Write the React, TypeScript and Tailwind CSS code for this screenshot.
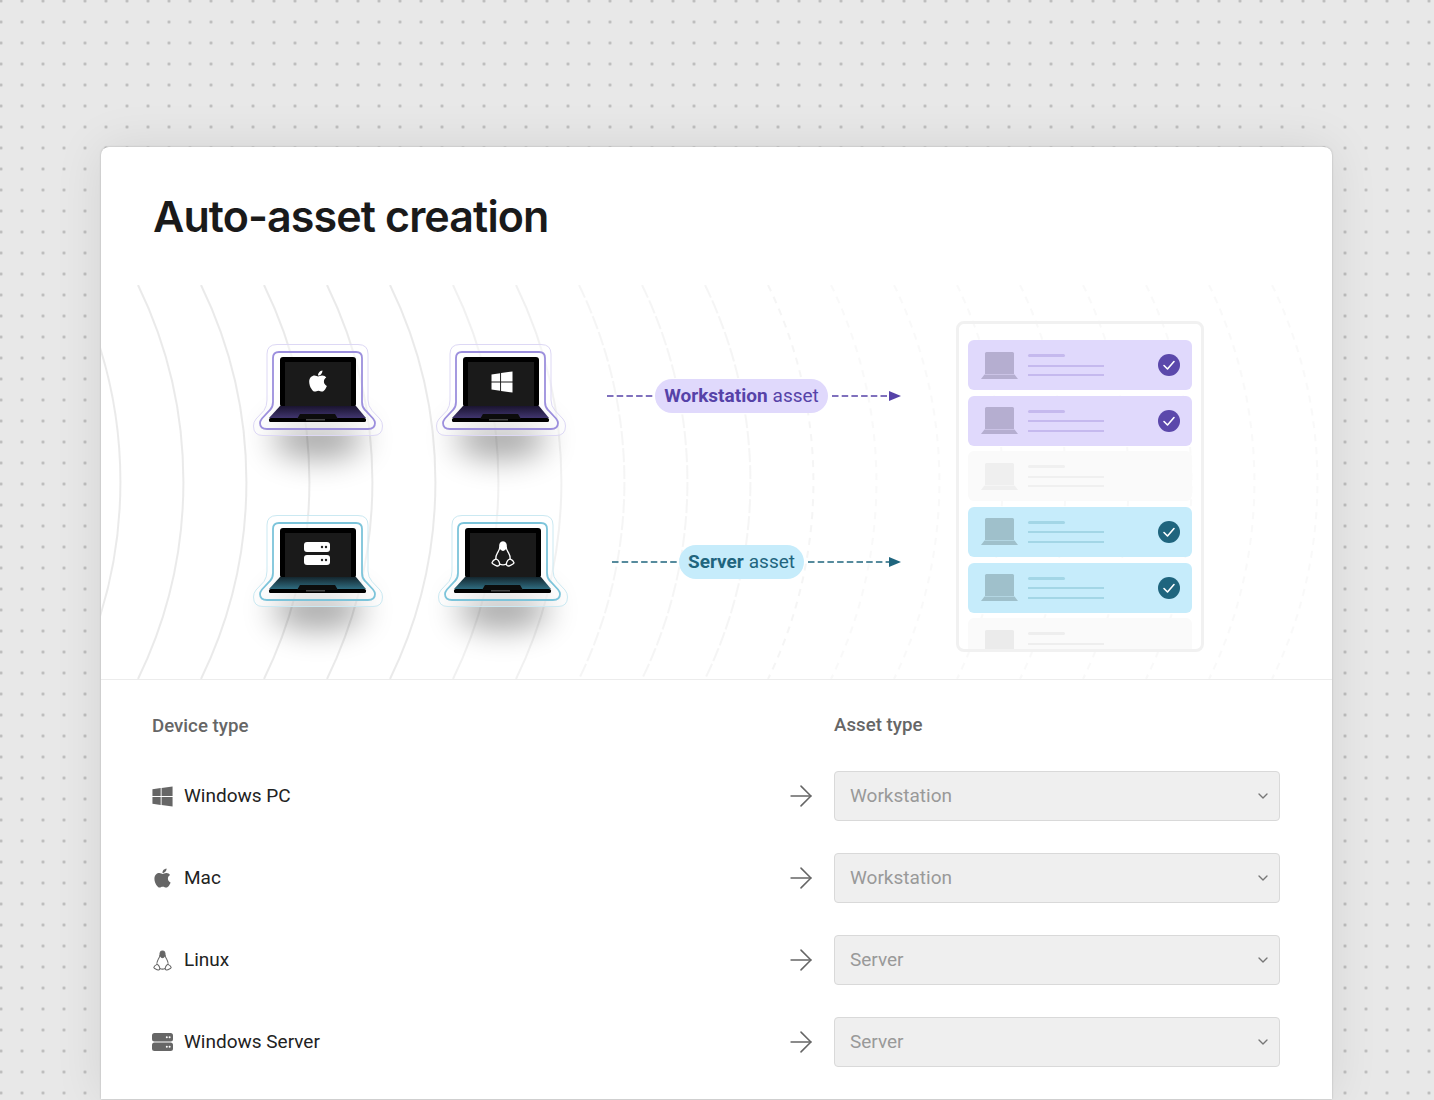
import { ArrowRight, ChevronDown } from 'lucide-react';
import { FaApple, FaWindows } from 'react-icons/fa';

const roboto = 'font-[Roboto,sans-serif]';

const devices = [
  { name: 'Windows PC', asset: 'Workstation', icon: <FaWindows size={23} color="#666" /> },
  { name: 'Mac', asset: 'Workstation', icon: <FaApple size={22} color="#666" /> },
  { name: 'Linux', asset: 'Server', icon: <Tux className="w-[19px] h-[21px] text-[#666]" /> },
  { name: 'Windows Server', asset: 'Server', icon: <ServerIcon className="w-[21px] h-[18px]" /> },
];

const listRows = [
  { bg: 'bg-[#e0d9fc]', icon: 'text-[#b5aed0]', line: 'bg-[#c5b9ee]', check: '#5b48ab' },
  { bg: 'bg-[#e0d9fc]', icon: 'text-[#b5aed0]', line: 'bg-[#c5b9ee]', check: '#5b48ab' },
  { bg: 'bg-[#fafafa]', icon: 'text-[#efefef]', line: 'bg-[#f0f0f0]' },
  { bg: 'bg-[#c6ecfb]', icon: 'text-[#9fc0cb]', line: 'bg-[#a3d6e6]', check: '#1f657e' },
  { bg: 'bg-[#c6ecfb]', icon: 'text-[#9fc0cb]', line: 'bg-[#a3d6e6]', check: '#1f657e' },
  { bg: 'bg-[#fafafa]', icon: 'text-[#ebebeb]', line: 'bg-[#eeeeee]' },
];

function Tux({ className }: { className?: string }) {
  return (
    <svg viewBox="0 0 24 26" fill="none" stroke="currentColor" strokeWidth="1.300" className={className}>
      <path d="M8.800 6C8.800 8.600 7.400 10 6.200 12.400C5 14.600 4.600 16.600 5 18.600M15.200 6C15.200 8.600 16.600 10 17.800 12.400C19 14.600 19.400 16.600 19 18.600" />
      <path d="M8.600 23.200C10.600 24 13.400 24 15.400 23.200" />
      <path d="M12 1C9.600 1 8.600 3 8.800 6.400C10 8.800 10.800 9.400 12 9.400C13.200 9.400 14 8.800 15.200 6.400C15.400 3 14.400 1 12 1Z" fill="currentColor" />
      <path d="M4.600 18.200C3 18.800 1.400 20.600 1 21.800C1 23 3.400 23.800 5.600 24.800C7 25.400 8.800 24.600 8.600 22.800C8.400 20.600 6.400 17.600 4.600 18.200Z" />
      <path d="M19.400 18.200C21 18.800 22.600 20.600 23 21.800C23 23 20.600 23.800 18.400 24.800C17 25.400 15.200 24.600 15.400 22.800C15.600 20.600 17.600 17.600 19.400 18.200Z" />
    </svg>
  );
}

function ServerIcon({ className }: { className?: string }) {
  return (
    <svg viewBox="0 0 21 18" className={className}>
      <rect x="0" y="0" width="21" height="8.400" rx="2.500" fill="#666" />
      <rect x="0" y="9.600" width="21" height="8.400" rx="2.500" fill="#666" />
      <circle cx="14.800" cy="4.200" r="1" fill="#fff" />
      <circle cx="17.600" cy="4.200" r="1" fill="#fff" />
      <circle cx="14.800" cy="13.800" r="1" fill="#fff" />
      <circle cx="17.600" cy="13.800" r="1" fill="#fff" />
    </svg>
  );
}

function Arcs() {
  const peaks = Array.from({ length: 20 }, (_, i) => 19 + i * 63);
  return (
    <svg className="absolute inset-0 w-full h-full" viewBox="0 0 1231 394" fill="none">
      {peaks.map((p, i) => (
        <path
          key={p}
          d={`M${p - 45} 0A450 450 0 0 1 ${p - 45} 394`}
          stroke="#e6e6e6"
          strokeWidth="2"
          strokeDasharray={i < 8 ? undefined : i < 11 ? '14 3' : '7 6'}
          opacity={i < 6 ? 0.85 : i < 8 ? 0.55 : i < 12 ? 0.4 : 0.25}
        />
      ))}
    </svg>
  );
}

function Laptop({ kind, tint }: { kind: 'apple' | 'windows' | 'server' | 'linux'; tint: 'purple' | 'blue' }) {
  const purple = tint === 'purple';
  const id = `${kind}-base`;
  return (
    <svg viewBox="0 0 130 92" className="w-[130px] h-[92px] overflow-visible">
      <defs>
        <linearGradient id={id} x1="0" y1="0" x2="0" y2="1">
          <stop offset="0" stopColor={purple ? '#1a1430' : '#14262e'} />
          <stop offset="1" stopColor={purple ? '#40356e' : '#2f6c80'} />
        </linearGradient>
        <filter id={`${kind}-blur`} x="-80%" y="-250%" width="260%" height="600%">
          <feGaussianBlur stdDeviation="16" />
        </filter>
      </defs>
      <ellipse cx="65" cy="94" rx="46" ry="20" fill="#000" opacity="0.36" filter={`url(#${kind}-blur)`} />
      <path
        d="M24 .5H105Q115 .5 115 10V56Q115 62 119 66.500L127 75Q129.500 78 129.500 82Q129.500 91.500 120 91.500H10Q.5 91.500 .5 82Q.5 78 3 75L11 66.500Q14 62 14 56V10Q14 .5 24 .5Z"
        fill="#fff"
        fillOpacity="0.4"
        stroke={purple ? '#ddd8f5' : '#cbe9f2'}
      />
      <path
        d="M26 8H103Q109 8 109 14V58Q109 63 112 66L120 74.500Q122 77 122 79Q122 85 115 85H14Q7 85 7 79Q7 77 9 74.500L17 66Q20 63 20 58V14Q20 8 26 8Z"
        fill="#fff"
        fillOpacity="0.4"
        stroke={purple ? '#9c8fdd' : '#7cc4da'}
        strokeWidth="1.800"
      />
      <rect x="27" y="13" width="76" height="50" rx="3" fill="#000" />
      <rect x="32" y="18" width="66" height="44" fill="#1a1a1a" />
      <path d="M27 62H103L113 74H16Z" fill={`url(#${id})`} />
      <rect x="16" y="74" width="97" height="4" rx="1.600" fill="#000" />
      <path d="M47 70H82L85 75H44Z" fill="#0c0c0c" />
      <rect x="53" y="75" width="19" height="1.500" fill="#444" />
      {kind === 'apple' && <FaApple x={53} y={25} size={24} color="#fff" />}
      {kind === 'windows' && <FaWindows x={54} y={26} size={24} color="#fff" />}
      {kind === 'server' && (
        <g>
          <rect x="51" y="27" width="26" height="10" rx="3" fill="#fff" />
          <rect x="51" y="40" width="26" height="10" rx="3" fill="#fff" />
          <circle cx="69" cy="32" r="1.200" fill="#222" />
          <circle cx="73" cy="32" r="1.200" fill="#222" />
          <circle cx="69" cy="45" r="1.200" fill="#222" />
          <circle cx="73" cy="45" r="1.200" fill="#222" />
        </g>
      )}
      {kind === 'linux' && (
        <svg x="53" y="26" width="24" height="26">
          <Tux className="text-white" />
        </svg>
      )}
    </svg>
  );
}

function Dashes({ width, color, arrow }: { width: number; color: string; arrow?: boolean }) {
  return (
    <svg width={width} height="12" viewBox={`0 0 ${width} 12`} className="block shrink-0">
      <line x1={arrow ? 4 : 0} y1="6" x2={arrow ? width - 8 : width} y2="6" stroke={color} strokeWidth="1.700" strokeDasharray="6.500 3.200" />
      {arrow && <path d={`M${width - 12} 1L${width} 6L${width - 12} 11Z`} fill={color} />}
    </svg>
  );
}

function Connector({ label, bg, color, lead, pill, tail, indent }: { label: string; bg: string; color: string; lead: number; pill: string; tail: number; indent: string }) {
  return (
    <div className={`flex items-center h-[34px] ${indent}`}>
      <Dashes width={lead} color={color} />
      <div className={`h-[34px] rounded-full flex items-center justify-center text-[19px] ${bg} ${pill}`} style={{ color }}>
        <span className="font-bold">{label}</span>
        <span className="ml-[5px]">asset</span>
      </div>
      <Dashes width={tail} color={color} arrow />
    </div>
  );
}

function ListRow({ bg, icon, line, check }: { bg: string; icon: string; line: string; check?: string }) {
  return (
    <div className={`h-[50px] shrink-0 rounded-[6px] flex items-center pl-[13px] pr-[12px] ${bg}`}>
      <svg viewBox="0 0 37 27" className={`w-[37px] h-[27px] shrink-0 ${icon}`} fill="currentColor">
        <path d="M4 1.500Q4 0 5.500 0H31.500Q33 0 33 1.500V22H4Z" />
        <path d="M3.500 22.500H33.500L37 27H0Z" />
      </svg>
      <div className="ml-[10px] flex flex-col gap-[7.500px] w-[76px]">
        <div className={`h-[3px] w-[37px] rounded-full ${line}`} />
        <div className={`h-[2px] w-[76px] ${line}`} />
        <div className={`h-[2px] w-[76px] ${line}`} />
      </div>
      {check && (
        <svg viewBox="0 0 22 22" className="w-[22px] h-[22px] ml-auto">
          <circle cx="11" cy="11" r="11" fill={check} />
          <path d="M6 11.500L9.500 15L16 7.500" fill="none" stroke="#fff" strokeWidth="1.600" strokeLinecap="round" strokeLinejoin="round" />
        </svg>
      )}
    </div>
  );
}

export default function App() {
  return (
    <div className="h-[1100px] overflow-hidden bg-[#e8e8e8] bg-[radial-gradient(circle,#b8b8b8_1.1px,transparent_1.7px)] bg-[length:21px_21px] bg-[position:-9.500px_-9.500px] pt-[147px] pl-[101px] pr-[102px]">
      <div className="h-[952px] bg-white rounded-t-[8px] shadow-[0_0_2px_rgba(0,0,0,0.25),0_0_50px_rgba(0,0,0,0.09)]">
        <div className="h-[138px] pl-[52px] pt-[41px]">
          <h1 className="font-[Inter,sans-serif] font-semibold text-[43px] leading-[56px] tracking-[-0.021em] text-[#1a1a1a]">Auto-asset creation</h1>
        </div>

        {/* Illustration */}
        <section className={`relative h-[395px] border-b border-[#ececec] overflow-hidden flex pl-[152px] ${roboto}`}>
          <Arcs />
          <div className="relative mt-[59px] w-[315px] h-fit grid grid-cols-[183px_130px] gap-y-[79px]">
            <Laptop kind="apple" tint="purple" />
            <Laptop kind="windows" tint="purple" />
            <Laptop kind="server" tint="blue" />
            <div className="ml-[2px]">
              <Laptop kind="linux" tint="blue" />
            </div>
          </div>

          <div className="relative ml-[39px] mt-[94px] w-[294px] h-fit flex flex-col gap-[132px]">
            <Connector label="Workstation" bg="bg-[#e0d9fc]" color="#5642a8" lead={48} pill="w-[173px]" tail={73} indent="" />
            <Connector label="Server" bg="bg-[#c6ecfb]" color="#1f657e" lead={67} pill="w-[125px]" tail={97} indent="ml-[5px]" />
          </div>

          <div className="relative ml-[55px] mt-[36px] w-[248px] h-[331px] border-[3px] border-[#f1f1f1] rounded-[8px] overflow-hidden flex flex-col gap-[5.670px] pt-[16px] px-[9px]">
            {listRows.map((row, i) => (
              <ListRow key={i} {...row} />
            ))}
          </div>
        </section>

        {/* Mapping table */}
        <div className={`pl-[51px] pr-[52px] pt-[34px] ${roboto}`}>
          <div className="flex justify-between h-[24px] text-[18.700px] leading-[24px] font-medium text-[#666]">
            <div>Device type</div>
            <div className="w-[446px] -mt-px">Asset type</div>
          </div>
          <div className="mt-[33px] flex flex-col gap-[32px]">
            {devices.map(device => (
              <div key={device.name} className="flex items-center h-[50px]">
                <div className="w-[21px] flex justify-center">{device.icon}</div>
                <div className="ml-[11px] flex-1 text-[19px] text-[#222]">{device.name}</div>
                <ArrowRight size={34} strokeWidth={1.1} className="text-[#666] mr-[16px]" />
                <div className="w-[446px] h-[50px] rounded-[4px] bg-[#efefef] border border-[#d9d9d9] flex items-center justify-between pl-[15px] pr-[8px] text-[19px] text-[#999]">
                  {device.asset}
                  <ChevronDown size={16} className="text-[#777]" />
                </div>
              </div>
            ))}
          </div>
        </div>
      </div>
    </div>
  );
}
